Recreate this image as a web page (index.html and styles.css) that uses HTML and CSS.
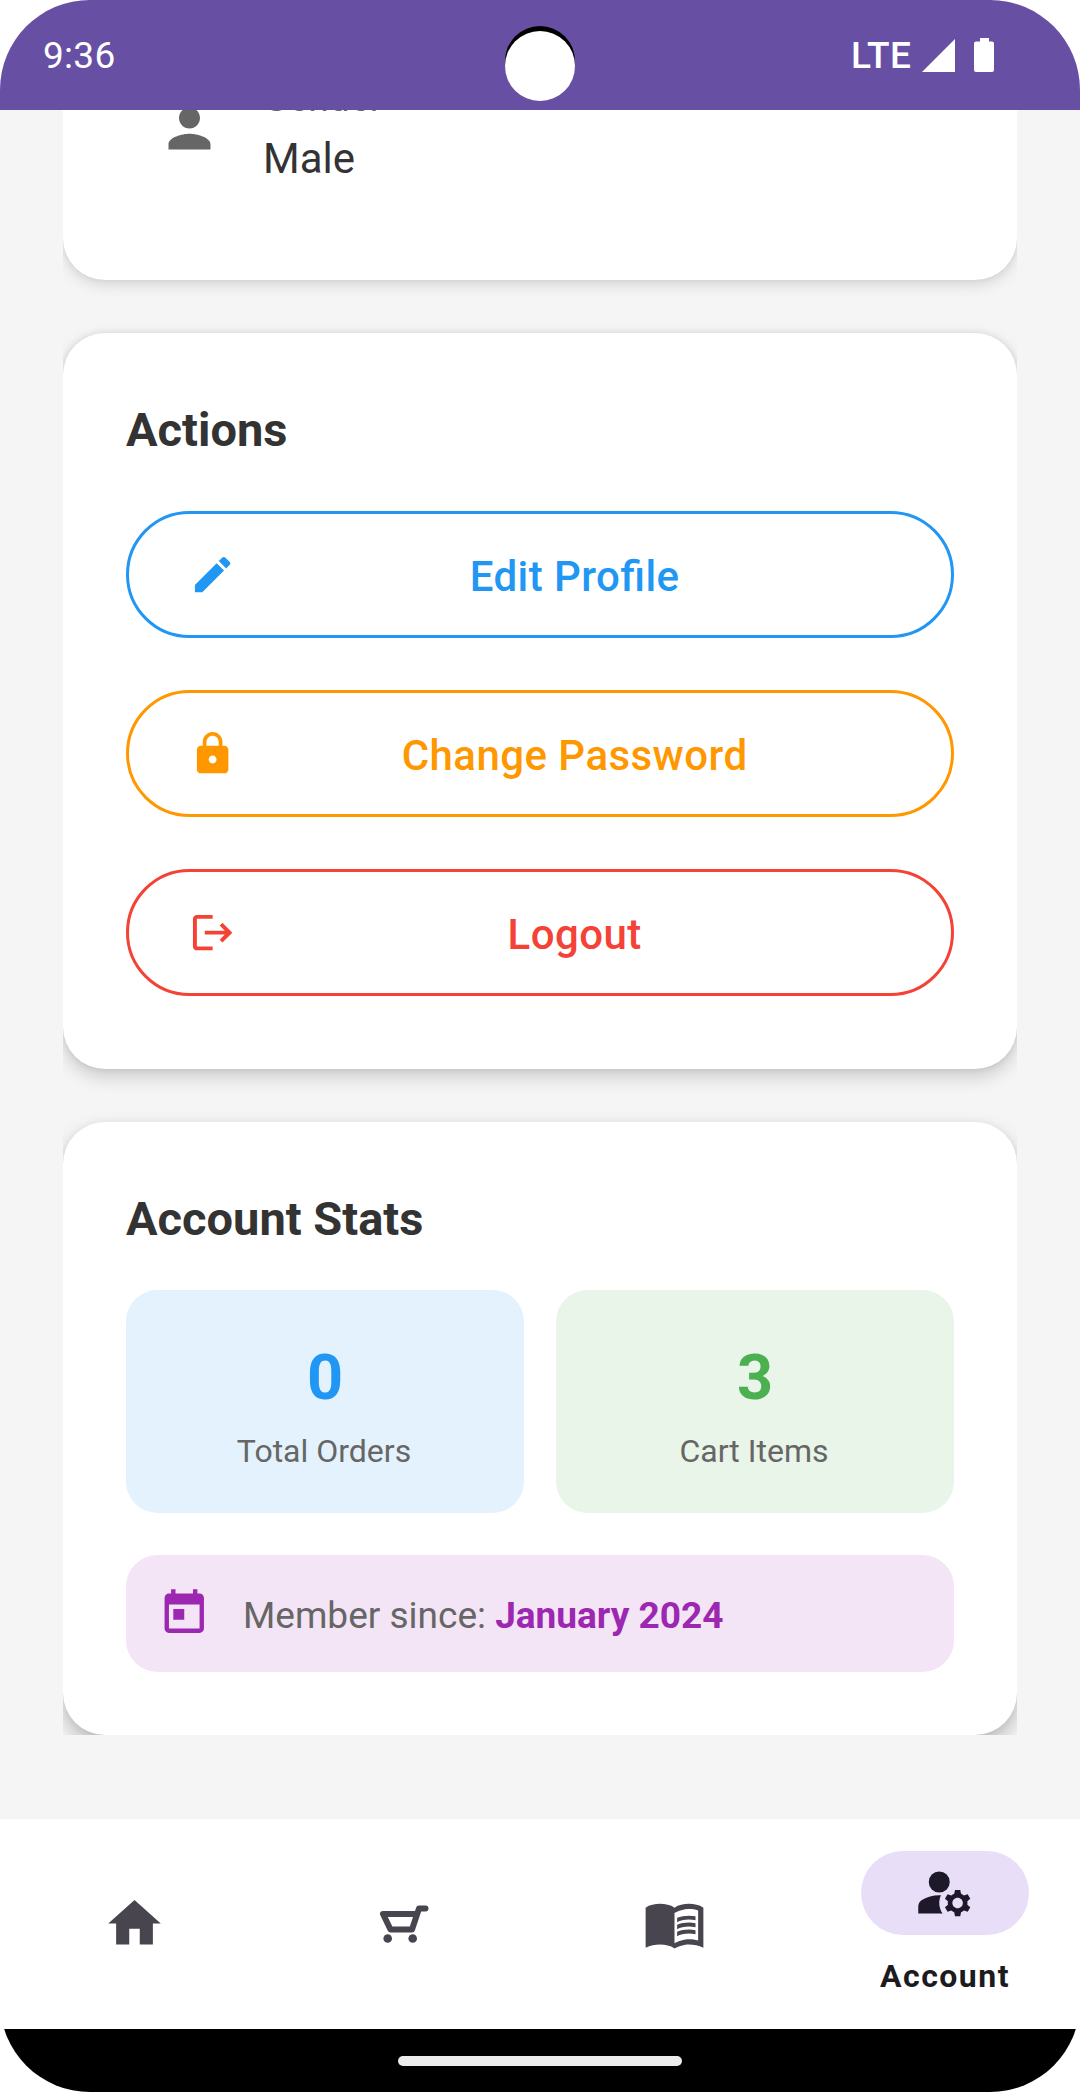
FILE: index.html
```html
<!DOCTYPE html>
<html lang="en">
<head>
<meta charset="utf-8">
<title>Account</title>
<link rel="stylesheet" href="styles.css">
</head>
<body>
<div class="phone">
  <header class="status-bar">
    <span class="clock">9:36</span>
    <div class="status-icons">
      <span class="network">LTE</span>
      <svg class="signal" viewBox="0 0 33 33"><path d="M33 0V33H0z"/></svg>
      <svg class="battery" viewBox="0 0 20 34"><path d="M6 0h9v3.500h3a2 2 0 0 1 2 2V32a2 2 0 0 1-2 2H2a2 2 0 0 1-2-2V5.500a2 2 0 0 1 2-2h4z"/></svg>
    </div>
    <div class="camera"></div>
  </header>

  <main class="scroll">
    <div class="cards">
      <section class="card card-info">
        <div class="info-row">
          <svg class="info-icon" viewBox="0 0 24 24"><path d="M12 12c2.210 0 4-1.790 4-4s-1.790-4-4-4-4 1.790-4 4 1.790 4 4 4zm0 2c-2.670 0-8 1.340-8 4v2h16v-2c0-2.660-5.330-4-8-4z"/></svg>
          <div class="info-text">
            <div class="info-label">Gender</div>
            <div class="info-value">Male</div>
          </div>
        </div>
      </section>

      <section class="card card-actions">
        <h2 class="card-title">Actions</h2>
        <div class="buttons">
          <button class="btn btn-blue">
            <svg class="btn-icon" viewBox="0 0 24 24"><path d="M3 17.250V21h3.750L17.810 9.940l-3.750-3.750L3 17.250zM20.710 7.040c.39-.39.39-1.020 0-1.410l-2.340-2.340c-.39-.39-1.020-.39-1.410 0l-1.830 1.830 3.750 3.750 1.830-1.830z"/></svg>
            <span class="btn-label">Edit Profile</span>
          </button>
          <button class="btn btn-orange">
            <svg class="btn-icon" viewBox="0 0 24 24"><path d="M18 8h-1V6c0-2.760-2.240-5-5-5S7 3.240 7 6v2H6c-1.100 0-2 .9-2 2v10c0 1.100.9 2 2 2h12c1.100 0 2-.9 2-2V10c0-1.100-.9-2-2-2zm-6 9c-1.100 0-2-.9-2-2s.9-2 2-2 2 .9 2 2-.9 2-2 2zm3.100-9H8.900V6c0-1.710 1.390-3.100 3.100-3.100s3.100 1.390 3.100 3.100v2z"/></svg>
            <span class="btn-label">Change Password</span>
          </button>
          <button class="btn btn-red">
            <svg class="btn-icon" viewBox="0 0 24 24"><path d="M17 7l-1.410 1.410L18.170 11H8v2h10.170l-2.580 2.580L17 17l5-5zM4 5h8V3H4c-1.100 0-2 .9-2 2v14c0 1.100.9 2 2 2h8v-2H4V5z"/></svg>
            <span class="btn-label">Logout</span>
          </button>
        </div>
      </section>

      <section class="card card-stats">
        <h2 class="card-title">Account Stats</h2>
        <div class="stats">
          <div class="stat stat-blue">
            <div class="stat-value">0</div>
            <div class="stat-label">Total Orders</div>
          </div>
          <div class="stat stat-green">
            <div class="stat-value">3</div>
            <div class="stat-label">Cart Items</div>
          </div>
        </div>
        <div class="member">
          <svg class="member-icon" viewBox="0 0 24 24"><path d="M19 3h-1V1h-2v2H8V1H6v2H5c-1.110 0-1.990.9-1.990 2L3 19c0 1.100.89 2 2 2h14c1.100 0 2-.9 2-2V5c0-1.100-.9-2-2-2zm0 16H5V8h14v11zM7 10h5v5H7z"/></svg>
          <div class="member-text">Member since: <b class="member-date">January 2024</b></div>
        </div>
      </section>
    </div>
  </main>

  <nav class="tabs">
    <a class="tab"><svg class="tab-icon" viewBox="0 0 24 24"><path d="M10 20v-6h4v6h5v-8h3L12 3 2 12h3v8z"/></svg></a>
    <a class="tab">
      <svg class="tab-icon tab-cart" viewBox="0 0 63 63">
        <path class="cart-frame" d="M52.500 16.500H46L39 37.500H17.500L10 22H43"/>
        <circle cx="14.700" cy="46.500" r="4.300"/><circle cx="39.700" cy="46.500" r="4.300"/>
      </svg>
    </a>
    <a class="tab"><svg class="tab-icon" viewBox="0 0 24 24"><path fill-rule="evenodd" d="M23 6c-1.510-1.100-3.550-1.500-5.500-1.500S13.450 4.900 12 6c-1.450-1.100-3.550-1.500-5.500-1.500S2.450 4.900 1 6v15.200C2.800 20.400 4.700 20 6.500 20c1.950 0 4.050.4 5.500 1.500 1.350-.85 3.800-1.500 5.500-1.500 1.850 0 3.700.4 5.500 1.200zM21 18.500c-1.100-.35-2.300-.5-3.500-.5-1.700 0-4.150.65-5.500 1.500V8c1.350-.85 3.800-1.500 5.500-1.500 1.200 0 2.400.15 3.500.5z"/><path d="M17.500 10.500c.88 0 1.730.09 2.500.26V9.240C19.210 9.090 18.360 9 17.500 9c-1.700 0-3.240.29-4.500.83v1.660c1.130-.64 2.700-.99 4.500-.99zM13 12.490v1.660c1.130-.64 2.700-.99 4.500-.99.88 0 1.730.09 2.500.26V11.900c-.79-.15-1.640-.24-2.500-.24-1.700 0-3.240.3-4.500.83zM17.500 14.330c-1.700 0-3.240.29-4.500.83v1.660c1.130-.64 2.700-.99 4.500-.99.88 0 1.730.09 2.500.26v-1.520c-.79-.16-1.640-.24-2.500-.24z"/></svg></a>
    <a class="tab tab-active">
      <span class="pill"><svg class="tab-icon" viewBox="0 0 24 24"><circle cx="10" cy="8" r="4"/><path d="M10.670 13.020C10.450 13.010 10.230 13 10 13c-2.420 0-4.680.67-6.610 1.820C2.510 15.340 2 16.320 2 17.350V20h9.260C10.470 18.870 10 17.490 10 16c0-1.070.25-2.070.67-2.980z"/><path d="M20.750 16c0-.22-.03-.42-.06-.63l1.140-1.010-1-1.730-1.450.49c-.32-.27-.68-.48-1.080-.63L18 11h-2l-.3 1.490c-.4.15-.76.36-1.080.63l-1.450-.49-1 1.730 1.140 1.010c-.03.21-.06.41-.06.63s.03.42.06.63l-1.140 1.010 1 1.730 1.450-.49c.32.27.68.48 1.080.63L16 21h2l.3-1.490c.4-.15.76-.36 1.080-.63l1.450.49 1-1.730-1.140-1.010c.03-.21.06-.41.06-.63zM17 18c-1.100 0-2-.9-2-2s.9-2 2-2 2 .9 2 2-.9 2-2 2z"/></svg></span>
      <span class="tab-label">Account</span>
    </a>
  </nav>

  <footer class="gesture"><div class="handle"></div></footer>
</div>
</body>
</html>
```
FILE: styles.css
```css
* {
  box-sizing: border-box;
}

body {
  margin: 0;
  background: #fff;
  font-family: Roboto, "Liberation Sans", sans-serif;
}

svg {
  display: block;
  flex: none;
  fill: currentColor;
}

.phone {
  position: relative;
  display: flex;
  flex-direction: column;
  width: 1080px;
  height: 2092px;
  border-radius: 90px;
  overflow: hidden;
  background: #f5f5f5;
}

/* Status bar */
.status-bar {
  display: flex;
  flex: none;
  align-items: center;
  justify-content: space-between;
  height: 110px;
  padding: 0 86px 0 43px;
  background: #6750a4;
  color: #fff;
  font-size: 37px;
}

.clock {
  letter-spacing: .3px;
}

.status-icons {
  display: flex;
  align-items: center;
}

.network {
  font-weight: 500;
  letter-spacing: .5px;
}

.signal {
  width: 33px;
  height: 33px;
  margin-left: 10.5px;
}

.battery {
  width: 20px;
  height: 34px;
  margin-left: 19px;
}

.camera {
  position: absolute;
  left: 505px;
  top: 26px;
  width: 70px;
  height: 70px;
  border-radius: 50%;
  background: #000;
}

.camera::after {
  content: "";
  position: absolute;
  left: -.5px;
  top: 4.5px;
  width: 70px;
  height: 70px;
  border-radius: 50%;
  background: #fff;
}

/* Scrolled content */
.scroll {
  flex: 1;
  min-height: 0;
  padding: 0 63px 84px;
}

.cards {
  display: flex;
  flex-direction: column;
  justify-content: flex-end;
  gap: 53px;
  height: 100%;
  overflow: hidden;
}

.card {
  flex: none;
  padding: 63px;
  border-radius: 42px;
  background: #fff;
}

.card-info {
  padding-bottom: 96px;
  box-shadow: 0 5px 15px rgba(0, 0, 0, .12), 0 0 6px rgba(0, 0, 0, .08);
}

.card-actions {
  padding-bottom: 73px;
  box-shadow: 0 8px 18px rgba(0, 0, 0, .17), 0 0 7px rgba(0, 0, 0, .1);
}

.card-stats {
  box-shadow: 0 10px 20px rgba(0, 0, 0, .24), 0 0 7px rgba(0, 0, 0, .05);
}

.card-title {
  margin: 0;
  color: #333;
  font-size: 47px;
  font-weight: 700;
  line-height: 68px;
}

.info-row {
  display: flex;
  align-items: flex-start;
  gap: 42.5px;
  padding-left: 31.5px;
}

.info-icon {
  width: 63px;
  height: 63px;
  margin-top: 20px;
  color: #666;
}

.info-label {
  color: #666;
  font-size: 37px;
  letter-spacing: .2px;
  line-height: 44px;
}

.info-value {
  margin-top: 13px;
  color: #333;
  font-size: 42px;
  line-height: 50px;
}

/* Actions */
.buttons {
  display: flex;
  flex-direction: column;
  gap: 52px;
  margin-top: 47px;
}

.btn {
  display: flex;
  align-items: center;
  gap: 22px;
  height: 127px;
  padding: 0 60px;
  border: 3px solid currentColor;
  border-radius: 64px;
  background: transparent;
  font-family: inherit;
}

.btn-icon {
  width: 47.25px;
  height: 47.25px;
}

.btn-label {
  flex: 1;
  padding-top: 4px;
  font-size: 42px;
  font-weight: 500;
  font-feature-settings: "liga" 1;
  letter-spacing: .45px;
  line-height: 50px;
  text-align: center;
}

.btn-blue { color: #2196f3; }
.btn-orange { color: #ff9800; }
.btn-red { color: #f44336; }

/* Stats */
.stats {
  display: grid;
  grid-template-columns: 1fr 1fr;
  gap: 32px;
  margin-top: 37px;
}

.stat {
  height: 223px;
  padding-top: 49px;
  border-radius: 31.5px;
  text-align: center;
}

.stat-blue { background: #e3f2fd; }
.stat-green { background: #e8f5e8; }
.stat-blue .stat-value { color: #2196f3; }
.stat-green .stat-value { color: #4caf50; }

.stat-value {
  font-size: 63px;
  font-weight: 700;
  line-height: 78px;
}

.stat-label {
  margin-top: 15px;
  padding-right: 2px;
  color: #666;
  font-size: 32px;
  line-height: 38px;
}

.member {
  display: flex;
  align-items: center;
  gap: 33px;
  height: 117px;
  margin-top: 42px;
  padding: 0 31.5px;
  border-radius: 31.5px;
  background: #f3e5f5;
}

.member-icon {
  width: 52.5px;
  height: 52.5px;
  color: #9c27b0;
}

.member-text {
  padding-top: 4px;
  color: #666;
  font-size: 37px;
  line-height: 44px;
}

.member-date {
  color: #9c27b0;
}

/* Bottom navigation */
.tabs {
  display: grid;
  flex: none;
  grid-template-columns: repeat(4, 1fr);
  height: 210px;
  background: #fff;
}

.tab {
  display: flex;
  flex-direction: column;
  align-items: center;
  justify-content: center;
  color: #49454f;
}

.tab-icon {
  width: 63px;
  height: 63px;
  margin: 0 1px 1px 0;
}

.cart-frame {
  fill: none;
  stroke: currentColor;
  stroke-width: 6;
  stroke-linecap: round;
  stroke-linejoin: round;
}

.tab-active {
  justify-content: flex-start;
  padding-top: 32px;
  color: #1d192b;
}

.pill {
  display: flex;
  align-items: center;
  justify-content: center;
  width: 168px;
  height: 84px;
  border-radius: 42px;
  background: #e8def8;
}

.tab-label {
  margin-top: 21px;
  color: #1d1b20;
  font-size: 32px;
  font-weight: 700;
  letter-spacing: 1.5px;
  line-height: 40px;
}

/* System gesture bar */
.gesture {
  display: flex;
  flex: none;
  align-items: center;
  justify-content: center;
  height: 63px;
  background: #000;
}

.handle {
  width: 284px;
  height: 10px;
  border-radius: 5px;
  background: #ececec;
}
```
